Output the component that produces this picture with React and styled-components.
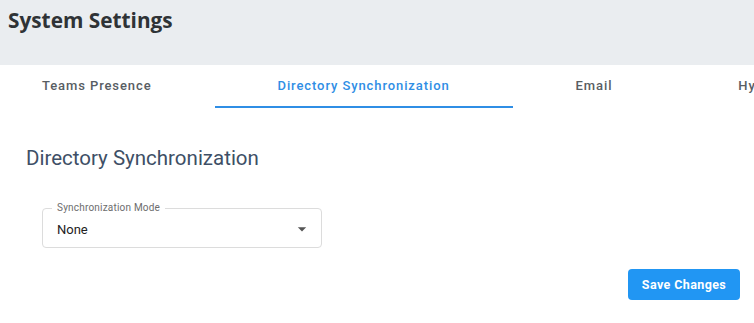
import React, { useState } from "react";
import styled, { createGlobalStyle } from "styled-components";

const GlobalStyle = createGlobalStyle`
  body {
    margin: 0;
    background: #ffffff;
    font-family: Roboto, "Liberation Sans", sans-serif;
    overflow: hidden;
  }
`;

const tabs = ["Teams Presence", "Directory Synchronization", "Email", "Hybrid Mode"];

const App = () => {
  const [active, setActive] = useState(1);

  return (
    <Page>
      <GlobalStyle />
      <Header>
        <Title>System Settings</Title>
      </Header>

      <TabStrip>
        <TabRow>
          {tabs.map((tab, i) => (
            <Tab key={tab} active={i === active} onClick={() => setActive(i)}>
              {tab}
            </Tab>
          ))}
        </TabRow>
      </TabStrip>

      <Content>
        <SectionTitle>Directory Synchronization</SectionTitle>

        <Field>
          <Legend>Synchronization Mode</Legend>
          <Value>None</Value>
          <Caret viewBox="0 0 24 24">
            <path d="M7 10l5 5 5-5z" fill="#555" />
          </Caret>
        </Field>

        <Actions>
          <SaveButton>Save Changes</SaveButton>
        </Actions>
      </Content>
    </Page>
  );
};

const Page = styled.div`
  width: 754px;
`;

const Header = styled.div`
  background: #eaedf0;
  height: 65px;
  padding: 6px 8px 0;
  box-sizing: border-box;
`;

const Title = styled.h1`
  margin: 0;
  font-family: "Open Sans", Lato, sans-serif;
  font-weight: 700;
  font-size: 20.8px;
  line-height: 28px;
  color: #2f3336;
`;

const TabStrip = styled.div`
  overflow: hidden;
  height: 43px;
`;

const TabRow = styled.div`
  display: flex;
  margin-left: -21px;
  white-space: nowrap;
`;

const Tab = styled.div`
  flex: none;
  height: 43px;
  line-height: 41px;
  padding: 0 63px;
  box-sizing: border-box;
  font-size: 13px;
  font-weight: 500;
  letter-spacing: 0.9px;
  color: ${(p) => (p.active ? "#2f8ee5" : "#585d63")};
  border-bottom: 2px solid ${(p) => (p.active ? "#2f8ee5" : "transparent")};
  cursor: pointer;
`;

const Content = styled.div`
  padding: 36px 14px 0 26px;
`;

const SectionTitle = styled.h2`
  margin: 0;
  font-size: 20.5px;
  font-weight: 400;
  line-height: 28px;
  color: #3e4f66;
`;

const Field = styled.div`
  position: relative;
  margin: 36px 0 0 16px;
  width: 280px;
  height: 40px;
  box-sizing: border-box;
  border: 1px solid #dcdcdc;
  border-radius: 4px;
  display: flex;
  align-items: center;
  padding: 0 14px;
`;

const Legend = styled.span`
  position: absolute;
  top: -7px;
  left: 9px;
  padding: 0 5px;
  background: #fff;
  font-size: 10px;
  line-height: 12px;
  color: #6d6d6d;
  letter-spacing: 0.2px;
`;

const Value = styled.span`
  flex: 1;
  font-size: 13px;
  color: #222;
  padding-top: 2px;
`;

const Caret = styled.svg`
  width: 20px;
  height: 20px;
  margin-right: -5px;
  margin-top: 1px;
`;

const Actions = styled.div`
  display: flex;
  justify-content: flex-end;
  margin-top: 21px;
`;

const SaveButton = styled.button`
  width: 112px;
  height: 31px;
  border: none;
  border-radius: 4px;
  background: #2196f3;
  color: #fff;
  font-family: Roboto, "Liberation Sans", sans-serif;
  font-size: 12.5px;
  font-weight: 700;
  letter-spacing: 0.4px;
  cursor: pointer;
`;

export default App;
